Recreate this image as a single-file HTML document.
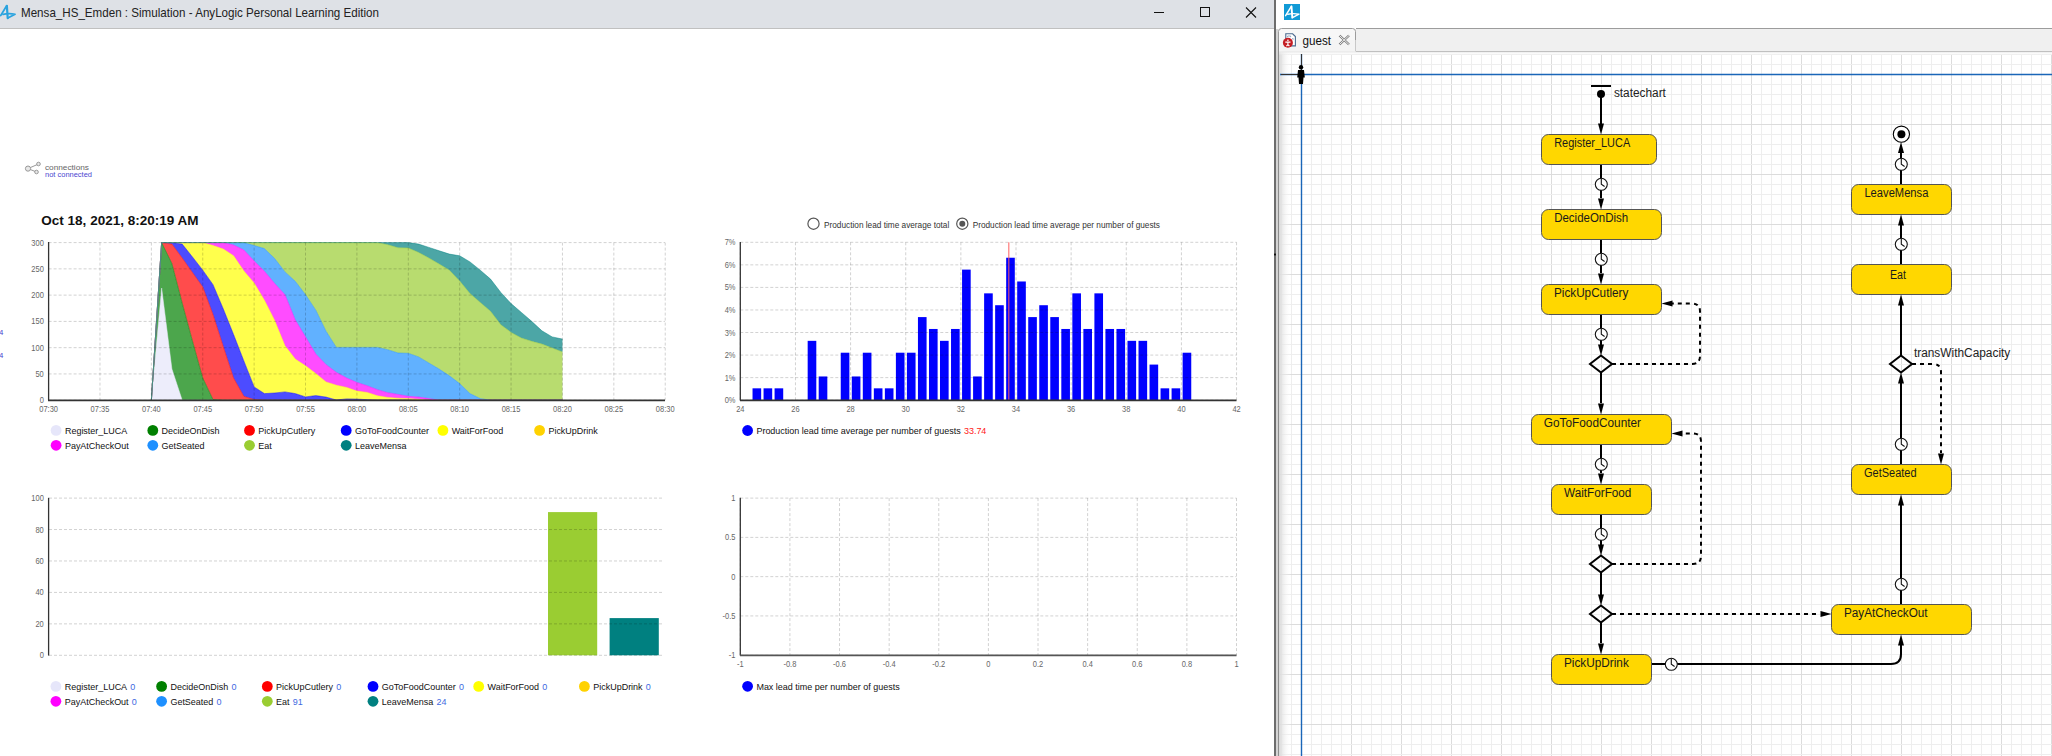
<!DOCTYPE html>
<html><head><meta charset="utf-8"><style>
html,body{margin:0;padding:0;width:2052px;height:756px;overflow:hidden;background:#fff;font-family:"Liberation Sans", sans-serif;}
svg text{font-family:"Liberation Sans", sans-serif;}
</style></head><body>
<svg width="2052" height="756" viewBox="0 0 2052 756" style="position:absolute;left:0;top:0">
<rect x="0" y="0" width="2052" height="756" fill="#fff"/>
<!-- title bar -->
<rect x="0" y="0" width="1274" height="28" fill="#dee1e6"/>
<rect x="0" y="28" width="1274" height="1" fill="#c0c0c0"/>
<g transform="translate(-1,3.3) scale(1.05)" fill="none" stroke="#29a3df" stroke-linecap="round">
<path d="M1.6 11.6 L7.3 2.4" stroke-width="1.7"/><path d="M7.5 2.4 L8.3 14.2" stroke-width="2.1"/>
<path d="M3.8 10.6 Q9 9.2 15.3 10.4 L8.4 14" stroke-width="1.6" stroke-linejoin="round"/></g>
<text x="21" y="17" font-size="12.2" fill="#222" textLength="358" lengthAdjust="spacingAndGlyphs">Mensa_HS_Emden : Simulation - AnyLogic Personal Learning Edition</text>
<rect x="1154" y="12" width="10" height="1" fill="#111"/>
<rect x="1200.5" y="7.5" width="9" height="9" fill="none" stroke="#111" stroke-width="1"/>
<path d="M1246 7.5 L1256 17.5 M1256 7.5 L1246 17.5" stroke="#111" stroke-width="1.1"/>
<!-- connections -->
<g stroke="#999" stroke-width="1" fill="#e8e8e8">
<line x1="28" y1="168.6" x2="38.5" y2="164"/><line x1="28" y1="168.6" x2="36.5" y2="172"/>
<circle cx="28" cy="168.6" r="2.6"/><circle cx="38.5" cy="164" r="1.8"/><circle cx="36.5" cy="172" r="1.8"/>
</g>
<text x="45" y="170" font-size="8" fill="#666" textLength="44" lengthAdjust="spacingAndGlyphs">connections</text>
<text x="45" y="177" font-size="8" fill="#4b45d0" textLength="47" lengthAdjust="spacingAndGlyphs">not connected</text>
<text x="-0.9" y="334.8" font-size="7.8" fill="#4b45d0">4</text>
<text x="-0.9" y="357.6" font-size="7.8" fill="#4b45d0">4</text>
<text x="41.3" y="224.5" font-size="13.5" font-weight="bold" fill="#111" textLength="157.3" lengthAdjust="spacingAndGlyphs">Oct 18, 2021, 8:20:19 AM</text>
<polygon points="151.37,400.2 161.65,288 171.92,369 182.2,400.2 192.48,400.2 202.75,400.2 213.03,400.2 223.31,400.2 233.59,400.2 243.86,400.2 254.14,400.2 264.42,400.2 274.69,400.2 284.97,400.2 295.25,400.2 305.52,400.2 315.8,400.2 326.08,400.2 336.36,400.2 346.63,400.2 356.91,400.2 367.19,400.2 377.46,400.2 387.74,400.2 398.02,400.2 408.3,400.2 418.57,400.2 428.85,400.2 439.13,400.2 449.4,400.2 459.68,400.2 469.96,400.2 480.23,400.2 490.51,400.2 500.79,400.2 511.06,400.2 521.34,400.2 531.62,400.2 541.9,400.2 552.17,400.2 562.45,400.2 562.45,400.2 552.17,400.2 541.9,400.2 531.62,400.2 521.34,400.2 511.06,400.2 500.79,400.2 490.51,400.2 480.23,400.2 469.96,400.2 459.68,400.2 449.4,400.2 439.13,400.2 428.85,400.2 418.57,400.2 408.3,400.2 398.02,400.2 387.74,400.2 377.46,400.2 367.19,400.2 356.91,400.2 346.63,400.2 336.36,400.2 326.08,400.2 315.8,400.2 305.52,400.2 295.25,400.2 284.97,400.2 274.69,400.2 264.42,400.2 254.14,400.2 243.86,400.2 233.59,400.2 223.31,400.2 213.03,400.2 202.75,400.2 192.48,400.2 182.2,400.2 171.92,400.2 161.65,400.2 151.37,400.2" fill="#e6e6fa" fill-opacity="0.7"/><polygon points="151.37,400.2 161.65,242.6 171.92,263.6 182.2,303 192.48,341 202.75,378 213.03,399.5 223.31,400.2 233.59,400.2 243.86,400.2 254.14,400.2 264.42,400.2 274.69,400.2 284.97,400.2 295.25,400.2 305.52,400.2 315.8,400.2 326.08,400.2 336.36,400.2 346.63,400.2 356.91,400.2 367.19,400.2 377.46,400.2 387.74,400.2 398.02,400.2 408.3,400.2 418.57,400.2 428.85,400.2 439.13,400.2 449.4,400.2 459.68,400.2 469.96,400.2 480.23,400.2 490.51,400.2 500.79,400.2 511.06,400.2 521.34,400.2 531.62,400.2 541.9,400.2 552.17,400.2 562.45,400.2 562.45,400.2 552.17,400.2 541.9,400.2 531.62,400.2 521.34,400.2 511.06,400.2 500.79,400.2 490.51,400.2 480.23,400.2 469.96,400.2 459.68,400.2 449.4,400.2 439.13,400.2 428.85,400.2 418.57,400.2 408.3,400.2 398.02,400.2 387.74,400.2 377.46,400.2 367.19,400.2 356.91,400.2 346.63,400.2 336.36,400.2 326.08,400.2 315.8,400.2 305.52,400.2 295.25,400.2 284.97,400.2 274.69,400.2 264.42,400.2 254.14,400.2 243.86,400.2 233.59,400.2 223.31,400.2 213.03,400.2 202.75,400.2 192.48,400.2 182.2,400.2 171.92,369 161.65,288 151.37,400.2" fill="#008000" fill-opacity="0.7"/><polygon points="151.37,400.2 161.65,242.6 171.92,244.1 182.2,258 192.48,272.5 202.75,286.9 213.03,314.5 223.31,346.5 233.59,378 243.86,396.3 254.14,399.5 264.42,400.2 274.69,400.2 284.97,400.2 295.25,400.2 305.52,400.2 315.8,400.2 326.08,400.2 336.36,400.2 346.63,400.2 356.91,400.2 367.19,400.2 377.46,400.2 387.74,400.2 398.02,400.2 408.3,400.2 418.57,400.2 428.85,400.2 439.13,400.2 449.4,400.2 459.68,400.2 469.96,400.2 480.23,400.2 490.51,400.2 500.79,400.2 511.06,400.2 521.34,400.2 531.62,400.2 541.9,400.2 552.17,400.2 562.45,400.2 562.45,400.2 552.17,400.2 541.9,400.2 531.62,400.2 521.34,400.2 511.06,400.2 500.79,400.2 490.51,400.2 480.23,400.2 469.96,400.2 459.68,400.2 449.4,400.2 439.13,400.2 428.85,400.2 418.57,400.2 408.3,400.2 398.02,400.2 387.74,400.2 377.46,400.2 367.19,400.2 356.91,400.2 346.63,400.2 336.36,400.2 326.08,400.2 315.8,400.2 305.52,400.2 295.25,400.2 284.97,400.2 274.69,400.2 264.42,400.2 254.14,400.2 243.86,400.2 233.59,400.2 223.31,400.2 213.03,399.5 202.75,378 192.48,341 182.2,303 171.92,263.6 161.65,242.6 151.37,400.2" fill="#ff0000" fill-opacity="0.7"/><polygon points="151.37,400.2 161.65,242.6 171.92,242.6 182.2,244.1 192.48,257 202.75,270.2 213.03,284.7 223.31,309 233.59,334.6 243.86,361 254.14,386.9 264.42,393.6 274.69,393 284.97,391.9 295.25,393.6 305.52,396.9 315.8,395.6 326.08,397.1 336.36,400 346.63,398.9 356.91,399.1 367.19,399.7 377.46,400.2 387.74,400.2 398.02,400.2 408.3,400.2 418.57,400.2 428.85,400.2 439.13,400.2 449.4,400.2 459.68,400.2 469.96,400.2 480.23,400.2 490.51,400.2 500.79,400.2 511.06,400.2 521.34,400.2 531.62,400.2 541.9,400.2 552.17,400.2 562.45,400.2 562.45,400.2 552.17,400.2 541.9,400.2 531.62,400.2 521.34,400.2 511.06,400.2 500.79,400.2 490.51,400.2 480.23,400.2 469.96,400.2 459.68,400.2 449.4,400.2 439.13,400.2 428.85,400.2 418.57,400.2 408.3,400.2 398.02,400.2 387.74,400.2 377.46,400.2 367.19,400.2 356.91,400.2 346.63,400.2 336.36,400.2 326.08,400.2 315.8,400.2 305.52,400.2 295.25,400.2 284.97,400.2 274.69,400.2 264.42,400.2 254.14,399.5 243.86,396.3 233.59,378 223.31,346.5 213.03,314.5 202.75,286.9 192.48,272.5 182.2,258 171.92,244.1 161.65,242.6 151.37,400.2" fill="#0000ff" fill-opacity="0.7"/><polygon points="151.37,400.2 161.65,242.6 171.92,242.6 182.2,242.6 192.48,242.6 202.75,242.6 213.03,245.5 223.31,249 233.59,255.8 243.86,271 254.14,283 264.42,300.2 274.69,320.5 284.97,345.8 295.25,359.1 305.52,365.8 315.8,373.6 326.08,381.9 336.36,385.2 346.63,387.4 356.91,391.1 367.19,392.4 377.46,395.8 387.74,397.4 398.02,398.2 408.3,398.6 418.57,399.3 428.85,400.2 439.13,400.2 449.4,400.2 459.68,400.2 469.96,400.2 480.23,400.2 490.51,400.2 500.79,400.2 511.06,400.2 521.34,400.2 531.62,400.2 541.9,400.2 552.17,400.2 562.45,400.2 562.45,400.2 552.17,400.2 541.9,400.2 531.62,400.2 521.34,400.2 511.06,400.2 500.79,400.2 490.51,400.2 480.23,400.2 469.96,400.2 459.68,400.2 449.4,400.2 439.13,400.2 428.85,400.2 418.57,400.2 408.3,400.2 398.02,400.2 387.74,400.2 377.46,400.2 367.19,399.7 356.91,399.1 346.63,398.9 336.36,400 326.08,397.1 315.8,395.6 305.52,396.9 295.25,393.6 284.97,391.9 274.69,393 264.42,393.6 254.14,386.9 243.86,361 233.59,334.6 223.31,309 213.03,284.7 202.75,270.2 192.48,257 182.2,244.1 171.92,242.6 161.65,242.6 151.37,400.2" fill="#ffff00" fill-opacity="0.7"/><polygon points="151.37,400.2 161.65,242.6 171.92,242.6 182.2,242.6 192.48,242.6 202.75,242.6 213.03,242.6 223.31,242.6 233.59,245 243.86,250 254.14,261 264.42,271.3 274.69,283.6 284.97,294.7 295.25,320 305.52,336.9 315.8,354.1 326.08,364.7 336.36,372.4 346.63,378 356.91,382.4 367.19,385.8 377.46,389.7 387.74,392.7 398.02,394.4 408.3,396.3 418.57,397.1 428.85,398.6 439.13,400.2 449.4,400.2 459.68,400.2 469.96,400.2 480.23,400.2 490.51,400.2 500.79,400.2 511.06,400.2 521.34,400.2 531.62,400.2 541.9,400.2 552.17,400.2 562.45,400.2 562.45,400.2 552.17,400.2 541.9,400.2 531.62,400.2 521.34,400.2 511.06,400.2 500.79,400.2 490.51,400.2 480.23,400.2 469.96,400.2 459.68,400.2 449.4,400.2 439.13,400.2 428.85,400.2 418.57,399.3 408.3,398.6 398.02,398.2 387.74,397.4 377.46,395.8 367.19,392.4 356.91,391.1 346.63,387.4 336.36,385.2 326.08,381.9 315.8,373.6 305.52,365.8 295.25,359.1 284.97,345.8 274.69,320.5 264.42,300.2 254.14,283 243.86,271 233.59,255.8 223.31,249 213.03,245.5 202.75,242.6 192.48,242.6 182.2,242.6 171.92,242.6 161.65,242.6 151.37,400.2" fill="#ff00ff" fill-opacity="0.7"/><polygon points="151.37,400.2 161.65,242.6 171.92,242.6 182.2,242.6 192.48,242.6 202.75,242.6 213.03,242.6 223.31,242.6 233.59,242.6 243.86,242.6 254.14,245.5 264.42,248.6 274.69,258.6 284.97,271.9 295.25,281.3 305.52,294.7 315.8,310.2 326.08,331.3 336.36,347.4 346.63,347.4 356.91,347.4 367.19,347.4 377.46,347.4 387.74,349.7 398.02,353 408.3,353.3 418.57,356.9 428.85,363 439.13,369.1 449.4,375.8 459.68,383.6 469.96,393.6 480.23,398.6 490.51,400.2 500.79,400.2 511.06,400.2 521.34,400.2 531.62,400.2 541.9,400.2 552.17,400.2 562.45,400.2 562.45,400.2 552.17,400.2 541.9,400.2 531.62,400.2 521.34,400.2 511.06,400.2 500.79,400.2 490.51,400.2 480.23,400.2 469.96,400.2 459.68,400.2 449.4,400.2 439.13,400.2 428.85,398.6 418.57,397.1 408.3,396.3 398.02,394.4 387.74,392.7 377.46,389.7 367.19,385.8 356.91,382.4 346.63,378 336.36,372.4 326.08,364.7 315.8,354.1 305.52,336.9 295.25,320 284.97,294.7 274.69,283.6 264.42,271.3 254.14,261 243.86,250 233.59,245 223.31,242.6 213.03,242.6 202.75,242.6 192.48,242.6 182.2,242.6 171.92,242.6 161.65,242.6 151.37,400.2" fill="#1e90ff" fill-opacity="0.7"/><polygon points="151.37,400.2 161.65,242.6 171.92,242.6 182.2,242.6 192.48,242.6 202.75,242.6 213.03,242.6 223.31,242.6 233.59,242.6 243.86,242.6 254.14,242.6 264.42,242.6 274.69,242.6 284.97,242.6 295.25,242.6 305.52,242.6 315.8,242.6 326.08,242.6 336.36,242.6 346.63,242.6 356.91,242.6 367.19,242.6 377.46,242.6 387.74,244.7 398.02,247.8 408.3,248 418.57,252.4 428.85,258 439.13,264.1 449.4,270.2 459.68,281 469.96,293.6 480.23,302.4 490.51,311.3 500.79,324.7 511.06,332.4 521.34,338 531.62,341.3 541.9,344.1 552.17,348 562.45,351.9 562.45,400.2 552.17,400.2 541.9,400.2 531.62,400.2 521.34,400.2 511.06,400.2 500.79,400.2 490.51,400.2 480.23,398.6 469.96,393.6 459.68,383.6 449.4,375.8 439.13,369.1 428.85,363 418.57,356.9 408.3,353.3 398.02,353 387.74,349.7 377.46,347.4 367.19,347.4 356.91,347.4 346.63,347.4 336.36,347.4 326.08,331.3 315.8,310.2 305.52,294.7 295.25,281.3 284.97,271.9 274.69,258.6 264.42,248.6 254.14,245.5 243.86,242.6 233.59,242.6 223.31,242.6 213.03,242.6 202.75,242.6 192.48,242.6 182.2,242.6 171.92,242.6 161.65,242.6 151.37,400.2" fill="#9acd32" fill-opacity="0.7"/><polygon points="151.37,400.2 161.65,242.6 171.92,242.6 182.2,242.6 192.48,242.6 202.75,242.6 213.03,242.6 223.31,242.6 233.59,242.6 243.86,242.6 254.14,242.6 264.42,242.6 274.69,242.6 284.97,242.6 295.25,242.6 305.52,242.6 315.8,242.6 326.08,242.6 336.36,242.6 346.63,242.6 356.91,242.6 367.19,242.6 377.46,242.6 387.74,242.6 398.02,242.6 408.3,242.6 418.57,244.1 428.85,247.4 439.13,250.8 449.4,254.1 459.68,255.8 469.96,261.9 480.23,270.2 490.51,279.1 500.79,292.4 511.06,303.6 521.34,312.4 531.62,321.3 541.9,330.8 552.17,336.9 562.45,339.1 562.45,351.9 552.17,348 541.9,344.1 531.62,341.3 521.34,338 511.06,332.4 500.79,324.7 490.51,311.3 480.23,302.4 469.96,293.6 459.68,281 449.4,270.2 439.13,264.1 428.85,258 418.57,252.4 408.3,248 398.02,247.8 387.74,244.7 377.46,242.6 367.19,242.6 356.91,242.6 346.63,242.6 336.36,242.6 326.08,242.6 315.8,242.6 305.52,242.6 295.25,242.6 284.97,242.6 274.69,242.6 264.42,242.6 254.14,242.6 243.86,242.6 233.59,242.6 223.31,242.6 213.03,242.6 202.75,242.6 192.48,242.6 182.2,242.6 171.92,242.6 161.65,242.6 151.37,400.2" fill="#008080" fill-opacity="0.7"/><polyline points="151.37,400.2 161.65,288 171.92,369 182.2,400.2 192.48,400.2 202.75,400.2 213.03,400.2 223.31,400.2 233.59,400.2 243.86,400.2 254.14,400.2 264.42,400.2 274.69,400.2 284.97,400.2 295.25,400.2 305.52,400.2 315.8,400.2 326.08,400.2 336.36,400.2 346.63,400.2 356.91,400.2 367.19,400.2 377.46,400.2 387.74,400.2 398.02,400.2 408.3,400.2 418.57,400.2 428.85,400.2 439.13,400.2 449.4,400.2 459.68,400.2 469.96,400.2 480.23,400.2 490.51,400.2 500.79,400.2 511.06,400.2 521.34,400.2 531.62,400.2 541.9,400.2 552.17,400.2 562.45,400.2" fill="none" stroke="#e6e6fa" stroke-opacity="0.6" stroke-width="0.8"/><polyline points="151.37,400.2 161.65,242.6 171.92,263.6 182.2,303 192.48,341 202.75,378 213.03,399.5 223.31,400.2 233.59,400.2 243.86,400.2 254.14,400.2 264.42,400.2 274.69,400.2 284.97,400.2 295.25,400.2 305.52,400.2 315.8,400.2 326.08,400.2 336.36,400.2 346.63,400.2 356.91,400.2 367.19,400.2 377.46,400.2 387.74,400.2 398.02,400.2 408.3,400.2 418.57,400.2 428.85,400.2 439.13,400.2 449.4,400.2 459.68,400.2 469.96,400.2 480.23,400.2 490.51,400.2 500.79,400.2 511.06,400.2 521.34,400.2 531.62,400.2 541.9,400.2 552.17,400.2 562.45,400.2" fill="none" stroke="#008000" stroke-opacity="0.6" stroke-width="0.8"/><polyline points="151.37,400.2 161.65,242.6 171.92,244.1 182.2,258 192.48,272.5 202.75,286.9 213.03,314.5 223.31,346.5 233.59,378 243.86,396.3 254.14,399.5 264.42,400.2 274.69,400.2 284.97,400.2 295.25,400.2 305.52,400.2 315.8,400.2 326.08,400.2 336.36,400.2 346.63,400.2 356.91,400.2 367.19,400.2 377.46,400.2 387.74,400.2 398.02,400.2 408.3,400.2 418.57,400.2 428.85,400.2 439.13,400.2 449.4,400.2 459.68,400.2 469.96,400.2 480.23,400.2 490.51,400.2 500.79,400.2 511.06,400.2 521.34,400.2 531.62,400.2 541.9,400.2 552.17,400.2 562.45,400.2" fill="none" stroke="#ff0000" stroke-opacity="0.6" stroke-width="0.8"/><polyline points="151.37,400.2 161.65,242.6 171.92,242.6 182.2,244.1 192.48,257 202.75,270.2 213.03,284.7 223.31,309 233.59,334.6 243.86,361 254.14,386.9 264.42,393.6 274.69,393 284.97,391.9 295.25,393.6 305.52,396.9 315.8,395.6 326.08,397.1 336.36,400 346.63,398.9 356.91,399.1 367.19,399.7 377.46,400.2 387.74,400.2 398.02,400.2 408.3,400.2 418.57,400.2 428.85,400.2 439.13,400.2 449.4,400.2 459.68,400.2 469.96,400.2 480.23,400.2 490.51,400.2 500.79,400.2 511.06,400.2 521.34,400.2 531.62,400.2 541.9,400.2 552.17,400.2 562.45,400.2" fill="none" stroke="#0000ff" stroke-opacity="0.6" stroke-width="0.8"/><polyline points="151.37,400.2 161.65,242.6 171.92,242.6 182.2,242.6 192.48,242.6 202.75,242.6 213.03,245.5 223.31,249 233.59,255.8 243.86,271 254.14,283 264.42,300.2 274.69,320.5 284.97,345.8 295.25,359.1 305.52,365.8 315.8,373.6 326.08,381.9 336.36,385.2 346.63,387.4 356.91,391.1 367.19,392.4 377.46,395.8 387.74,397.4 398.02,398.2 408.3,398.6 418.57,399.3 428.85,400.2 439.13,400.2 449.4,400.2 459.68,400.2 469.96,400.2 480.23,400.2 490.51,400.2 500.79,400.2 511.06,400.2 521.34,400.2 531.62,400.2 541.9,400.2 552.17,400.2 562.45,400.2" fill="none" stroke="#ffff00" stroke-opacity="0.6" stroke-width="0.8"/><polyline points="151.37,400.2 161.65,242.6 171.92,242.6 182.2,242.6 192.48,242.6 202.75,242.6 213.03,242.6 223.31,242.6 233.59,245 243.86,250 254.14,261 264.42,271.3 274.69,283.6 284.97,294.7 295.25,320 305.52,336.9 315.8,354.1 326.08,364.7 336.36,372.4 346.63,378 356.91,382.4 367.19,385.8 377.46,389.7 387.74,392.7 398.02,394.4 408.3,396.3 418.57,397.1 428.85,398.6 439.13,400.2 449.4,400.2 459.68,400.2 469.96,400.2 480.23,400.2 490.51,400.2 500.79,400.2 511.06,400.2 521.34,400.2 531.62,400.2 541.9,400.2 552.17,400.2 562.45,400.2" fill="none" stroke="#ff00ff" stroke-opacity="0.6" stroke-width="0.8"/><polyline points="151.37,400.2 161.65,242.6 171.92,242.6 182.2,242.6 192.48,242.6 202.75,242.6 213.03,242.6 223.31,242.6 233.59,242.6 243.86,242.6 254.14,245.5 264.42,248.6 274.69,258.6 284.97,271.9 295.25,281.3 305.52,294.7 315.8,310.2 326.08,331.3 336.36,347.4 346.63,347.4 356.91,347.4 367.19,347.4 377.46,347.4 387.74,349.7 398.02,353 408.3,353.3 418.57,356.9 428.85,363 439.13,369.1 449.4,375.8 459.68,383.6 469.96,393.6 480.23,398.6 490.51,400.2 500.79,400.2 511.06,400.2 521.34,400.2 531.62,400.2 541.9,400.2 552.17,400.2 562.45,400.2" fill="none" stroke="#1e90ff" stroke-opacity="0.6" stroke-width="0.8"/><polyline points="151.37,400.2 161.65,242.6 171.92,242.6 182.2,242.6 192.48,242.6 202.75,242.6 213.03,242.6 223.31,242.6 233.59,242.6 243.86,242.6 254.14,242.6 264.42,242.6 274.69,242.6 284.97,242.6 295.25,242.6 305.52,242.6 315.8,242.6 326.08,242.6 336.36,242.6 346.63,242.6 356.91,242.6 367.19,242.6 377.46,242.6 387.74,244.7 398.02,247.8 408.3,248 418.57,252.4 428.85,258 439.13,264.1 449.4,270.2 459.68,281 469.96,293.6 480.23,302.4 490.51,311.3 500.79,324.7 511.06,332.4 521.34,338 531.62,341.3 541.9,344.1 552.17,348 562.45,351.9" fill="none" stroke="#9acd32" stroke-opacity="0.6" stroke-width="0.8"/><polyline points="151.37,400.2 161.65,242.6 171.92,242.6 182.2,242.6 192.48,242.6 202.75,242.6 213.03,242.6 223.31,242.6 233.59,242.6 243.86,242.6 254.14,242.6 264.42,242.6 274.69,242.6 284.97,242.6 295.25,242.6 305.52,242.6 315.8,242.6 326.08,242.6 336.36,242.6 346.63,242.6 356.91,242.6 367.19,242.6 377.46,242.6 387.74,242.6 398.02,242.6 408.3,242.6 418.57,244.1 428.85,247.4 439.13,250.8 449.4,254.1 459.68,255.8 469.96,261.9 480.23,270.2 490.51,279.1 500.79,292.4 511.06,303.6 521.34,312.4 531.62,321.3 541.9,330.8 552.17,336.9 562.45,339.1" fill="none" stroke="#008080" stroke-opacity="0.6" stroke-width="0.8"/><line x1="48.6" y1="242.6" x2="665" y2="242.6" stroke="#000" stroke-opacity="0.18" stroke-width="1" stroke-dasharray="3,2"/><line x1="48.6" y1="268.87" x2="665" y2="268.87" stroke="#000" stroke-opacity="0.18" stroke-width="1" stroke-dasharray="3,2"/><line x1="48.6" y1="295.13" x2="665" y2="295.13" stroke="#000" stroke-opacity="0.18" stroke-width="1" stroke-dasharray="3,2"/><line x1="48.6" y1="321.4" x2="665" y2="321.4" stroke="#000" stroke-opacity="0.18" stroke-width="1" stroke-dasharray="3,2"/><line x1="48.6" y1="347.67" x2="665" y2="347.67" stroke="#000" stroke-opacity="0.18" stroke-width="1" stroke-dasharray="3,2"/><line x1="48.6" y1="373.93" x2="665" y2="373.93" stroke="#000" stroke-opacity="0.18" stroke-width="1" stroke-dasharray="3,2"/><line x1="48.6" y1="400.2" x2="665" y2="400.2" stroke="#000" stroke-opacity="0.18" stroke-width="1" stroke-dasharray="3,2"/><line x1="48.6" y1="242.6" x2="48.6" y2="400.2" stroke="#000" stroke-opacity="0.18" stroke-width="1" stroke-dasharray="3,2"/><line x1="99.98" y1="242.6" x2="99.98" y2="400.2" stroke="#000" stroke-opacity="0.18" stroke-width="1" stroke-dasharray="3,2"/><line x1="151.37" y1="242.6" x2="151.37" y2="400.2" stroke="#000" stroke-opacity="0.18" stroke-width="1" stroke-dasharray="3,2"/><line x1="202.75" y1="242.6" x2="202.75" y2="400.2" stroke="#000" stroke-opacity="0.18" stroke-width="1" stroke-dasharray="3,2"/><line x1="254.14" y1="242.6" x2="254.14" y2="400.2" stroke="#000" stroke-opacity="0.18" stroke-width="1" stroke-dasharray="3,2"/><line x1="305.53" y1="242.6" x2="305.53" y2="400.2" stroke="#000" stroke-opacity="0.18" stroke-width="1" stroke-dasharray="3,2"/><line x1="356.91" y1="242.6" x2="356.91" y2="400.2" stroke="#000" stroke-opacity="0.18" stroke-width="1" stroke-dasharray="3,2"/><line x1="408.3" y1="242.6" x2="408.3" y2="400.2" stroke="#000" stroke-opacity="0.18" stroke-width="1" stroke-dasharray="3,2"/><line x1="459.68" y1="242.6" x2="459.68" y2="400.2" stroke="#000" stroke-opacity="0.18" stroke-width="1" stroke-dasharray="3,2"/><line x1="511.06" y1="242.6" x2="511.06" y2="400.2" stroke="#000" stroke-opacity="0.18" stroke-width="1" stroke-dasharray="3,2"/><line x1="562.45" y1="242.6" x2="562.45" y2="400.2" stroke="#000" stroke-opacity="0.18" stroke-width="1" stroke-dasharray="3,2"/><line x1="613.84" y1="242.6" x2="613.84" y2="400.2" stroke="#000" stroke-opacity="0.18" stroke-width="1" stroke-dasharray="3,2"/><line x1="665.22" y1="242.6" x2="665.22" y2="400.2" stroke="#000" stroke-opacity="0.18" stroke-width="1" stroke-dasharray="3,2"/><line x1="48.6" y1="242" x2="48.6" y2="400.5" stroke="#333" stroke-width="1.3"/><line x1="48" y1="400.4" x2="665" y2="400.4" stroke="#333" stroke-width="1.6"/><text x="43.8" y="245.6" font-size="8.5" fill="#666" text-anchor="end" textLength="12.48" lengthAdjust="spacingAndGlyphs">300</text><text x="43.8" y="271.87" font-size="8.5" fill="#666" text-anchor="end" textLength="12.48" lengthAdjust="spacingAndGlyphs">250</text><text x="43.8" y="298.13" font-size="8.5" fill="#666" text-anchor="end" textLength="12.48" lengthAdjust="spacingAndGlyphs">200</text><text x="43.8" y="324.4" font-size="8.5" fill="#666" text-anchor="end" textLength="12.48" lengthAdjust="spacingAndGlyphs">150</text><text x="43.8" y="350.67" font-size="8.5" fill="#666" text-anchor="end" textLength="12.48" lengthAdjust="spacingAndGlyphs">100</text><text x="43.8" y="376.93" font-size="8.5" fill="#666" text-anchor="end" textLength="8.32" lengthAdjust="spacingAndGlyphs">50</text><text x="43.8" y="403.2" font-size="8.5" fill="#666" text-anchor="end" textLength="4.16" lengthAdjust="spacingAndGlyphs">0</text><text x="48.6" y="412" font-size="8.5" fill="#666" text-anchor="middle" textLength="18.72" lengthAdjust="spacingAndGlyphs">07:30</text><text x="99.98" y="412" font-size="8.5" fill="#666" text-anchor="middle" textLength="18.72" lengthAdjust="spacingAndGlyphs">07:35</text><text x="151.37" y="412" font-size="8.5" fill="#666" text-anchor="middle" textLength="18.72" lengthAdjust="spacingAndGlyphs">07:40</text><text x="202.75" y="412" font-size="8.5" fill="#666" text-anchor="middle" textLength="18.72" lengthAdjust="spacingAndGlyphs">07:45</text><text x="254.14" y="412" font-size="8.5" fill="#666" text-anchor="middle" textLength="18.72" lengthAdjust="spacingAndGlyphs">07:50</text><text x="305.53" y="412" font-size="8.5" fill="#666" text-anchor="middle" textLength="18.72" lengthAdjust="spacingAndGlyphs">07:55</text><text x="356.91" y="412" font-size="8.5" fill="#666" text-anchor="middle" textLength="18.72" lengthAdjust="spacingAndGlyphs">08:00</text><text x="408.3" y="412" font-size="8.5" fill="#666" text-anchor="middle" textLength="18.72" lengthAdjust="spacingAndGlyphs">08:05</text><text x="459.68" y="412" font-size="8.5" fill="#666" text-anchor="middle" textLength="18.72" lengthAdjust="spacingAndGlyphs">08:10</text><text x="511.06" y="412" font-size="8.5" fill="#666" text-anchor="middle" textLength="18.72" lengthAdjust="spacingAndGlyphs">08:15</text><text x="562.45" y="412" font-size="8.5" fill="#666" text-anchor="middle" textLength="18.72" lengthAdjust="spacingAndGlyphs">08:20</text><text x="613.84" y="412" font-size="8.5" fill="#666" text-anchor="middle" textLength="18.72" lengthAdjust="spacingAndGlyphs">08:25</text><text x="665.22" y="412" font-size="8.5" fill="#666" text-anchor="middle" textLength="18.72" lengthAdjust="spacingAndGlyphs">08:30</text><circle cx="56.1" cy="430.4" r="5.4" fill="#e6e6fa"/><text x="64.9" y="434" font-size="9.8" fill="#111" textLength="62.43" lengthAdjust="spacingAndGlyphs">Register_LUCA</text><circle cx="152.8" cy="430.4" r="5.4" fill="#008000"/><text x="161.6" y="434" font-size="9.8" fill="#111" textLength="57.94" lengthAdjust="spacingAndGlyphs">DecideOnDish</text><circle cx="249.5" cy="430.4" r="5.4" fill="#ff0000"/><text x="258.3" y="434" font-size="9.8" fill="#111" textLength="56.93" lengthAdjust="spacingAndGlyphs">PickUpCutlery</text><circle cx="346.2" cy="430.4" r="5.4" fill="#0000ff"/><text x="355" y="434" font-size="9.8" fill="#111" textLength="73.93" lengthAdjust="spacingAndGlyphs">GoToFoodCounter</text><circle cx="442.9" cy="430.4" r="5.4" fill="#ffff00"/><text x="451.7" y="434" font-size="9.8" fill="#111" textLength="51.6" lengthAdjust="spacingAndGlyphs">WaitForFood</text><circle cx="539.6" cy="430.4" r="5.4" fill="#ffd200"/><text x="548.4" y="434" font-size="9.8" fill="#111" textLength="49.43" lengthAdjust="spacingAndGlyphs">PickUpDrink</text><circle cx="56.1" cy="445.3" r="5.4" fill="#ff00ff"/><text x="64.9" y="448.9" font-size="9.8" fill="#111" textLength="63.93" lengthAdjust="spacingAndGlyphs">PayAtCheckOut</text><circle cx="152.8" cy="445.3" r="5.4" fill="#1e90ff"/><text x="161.6" y="448.9" font-size="9.8" fill="#111" textLength="42.96" lengthAdjust="spacingAndGlyphs">GetSeated</text><circle cx="249.5" cy="445.3" r="5.4" fill="#9acd32"/><text x="258.3" y="448.9" font-size="9.8" fill="#111" textLength="13.49" lengthAdjust="spacingAndGlyphs">Eat</text><circle cx="346.2" cy="445.3" r="5.4" fill="#008080"/><text x="355" y="448.9" font-size="9.8" fill="#111" textLength="51.45" lengthAdjust="spacingAndGlyphs">LeaveMensa</text><rect x="752.53" y="388.33" width="8.63" height="11.87" fill="#0000ff"/><rect x="763.56" y="388.33" width="8.63" height="11.87" fill="#0000ff"/><rect x="774.58" y="388.33" width="8.63" height="11.87" fill="#0000ff"/><rect x="807.67" y="340.84" width="8.63" height="59.36" fill="#0000ff"/><rect x="818.7" y="376.46" width="8.63" height="23.74" fill="#0000ff"/><rect x="840.75" y="352.71" width="8.63" height="47.49" fill="#0000ff"/><rect x="851.78" y="376.46" width="8.63" height="23.74" fill="#0000ff"/><rect x="862.81" y="352.71" width="8.63" height="47.49" fill="#0000ff"/><rect x="873.84" y="388.33" width="8.63" height="11.87" fill="#0000ff"/><rect x="884.86" y="388.33" width="8.63" height="11.87" fill="#0000ff"/><rect x="895.89" y="352.71" width="8.63" height="47.49" fill="#0000ff"/><rect x="906.92" y="352.71" width="8.63" height="47.49" fill="#0000ff"/><rect x="917.95" y="317.09" width="8.63" height="83.11" fill="#0000ff"/><rect x="928.98" y="328.97" width="8.63" height="71.23" fill="#0000ff"/><rect x="940" y="340.84" width="8.63" height="59.36" fill="#0000ff"/><rect x="951.03" y="328.97" width="8.63" height="71.23" fill="#0000ff"/><rect x="962.06" y="269.61" width="8.63" height="130.59" fill="#0000ff"/><rect x="973.09" y="376.46" width="8.63" height="23.74" fill="#0000ff"/><rect x="984.12" y="293.35" width="8.63" height="106.85" fill="#0000ff"/><rect x="995.14" y="305.22" width="8.63" height="94.98" fill="#0000ff"/><rect x="1006.17" y="257.73" width="8.63" height="142.47" fill="#0000ff"/><rect x="1017.2" y="281.48" width="8.63" height="118.72" fill="#0000ff"/><rect x="1028.23" y="317.09" width="8.63" height="83.11" fill="#0000ff"/><rect x="1039.26" y="305.22" width="8.63" height="94.98" fill="#0000ff"/><rect x="1050.28" y="317.09" width="8.63" height="83.11" fill="#0000ff"/><rect x="1061.31" y="328.97" width="8.63" height="71.23" fill="#0000ff"/><rect x="1072.34" y="293.35" width="8.63" height="106.85" fill="#0000ff"/><rect x="1083.37" y="328.97" width="8.63" height="71.23" fill="#0000ff"/><rect x="1094.4" y="293.35" width="8.63" height="106.85" fill="#0000ff"/><rect x="1105.42" y="328.97" width="8.63" height="71.23" fill="#0000ff"/><rect x="1116.45" y="328.97" width="8.63" height="71.23" fill="#0000ff"/><rect x="1127.48" y="340.84" width="8.63" height="59.36" fill="#0000ff"/><rect x="1138.51" y="340.84" width="8.63" height="59.36" fill="#0000ff"/><rect x="1149.54" y="364.58" width="8.63" height="35.62" fill="#0000ff"/><rect x="1160.56" y="388.33" width="8.63" height="11.87" fill="#0000ff"/><rect x="1171.59" y="388.33" width="8.63" height="11.87" fill="#0000ff"/><rect x="1182.62" y="352.71" width="8.63" height="47.49" fill="#0000ff"/><line x1="740.3" y1="242.3" x2="1236.5" y2="242.3" stroke="#000" stroke-opacity="0.18" stroke-width="1" stroke-dasharray="3,2"/><line x1="740.3" y1="264.86" x2="1236.5" y2="264.86" stroke="#000" stroke-opacity="0.18" stroke-width="1" stroke-dasharray="3,2"/><line x1="740.3" y1="287.41" x2="1236.5" y2="287.41" stroke="#000" stroke-opacity="0.18" stroke-width="1" stroke-dasharray="3,2"/><line x1="740.3" y1="309.97" x2="1236.5" y2="309.97" stroke="#000" stroke-opacity="0.18" stroke-width="1" stroke-dasharray="3,2"/><line x1="740.3" y1="332.53" x2="1236.5" y2="332.53" stroke="#000" stroke-opacity="0.18" stroke-width="1" stroke-dasharray="3,2"/><line x1="740.3" y1="355.09" x2="1236.5" y2="355.09" stroke="#000" stroke-opacity="0.18" stroke-width="1" stroke-dasharray="3,2"/><line x1="740.3" y1="377.64" x2="1236.5" y2="377.64" stroke="#000" stroke-opacity="0.18" stroke-width="1" stroke-dasharray="3,2"/><line x1="740.3" y1="400.2" x2="1236.5" y2="400.2" stroke="#000" stroke-opacity="0.18" stroke-width="1" stroke-dasharray="3,2"/><line x1="740.3" y1="242.3" x2="740.3" y2="400.2" stroke="#000" stroke-opacity="0.18" stroke-width="1" stroke-dasharray="3,2"/><line x1="795.44" y1="242.3" x2="795.44" y2="400.2" stroke="#000" stroke-opacity="0.18" stroke-width="1" stroke-dasharray="3,2"/><line x1="850.58" y1="242.3" x2="850.58" y2="400.2" stroke="#000" stroke-opacity="0.18" stroke-width="1" stroke-dasharray="3,2"/><line x1="905.72" y1="242.3" x2="905.72" y2="400.2" stroke="#000" stroke-opacity="0.18" stroke-width="1" stroke-dasharray="3,2"/><line x1="960.86" y1="242.3" x2="960.86" y2="400.2" stroke="#000" stroke-opacity="0.18" stroke-width="1" stroke-dasharray="3,2"/><line x1="1016" y1="242.3" x2="1016" y2="400.2" stroke="#000" stroke-opacity="0.18" stroke-width="1" stroke-dasharray="3,2"/><line x1="1071.14" y1="242.3" x2="1071.14" y2="400.2" stroke="#000" stroke-opacity="0.18" stroke-width="1" stroke-dasharray="3,2"/><line x1="1126.28" y1="242.3" x2="1126.28" y2="400.2" stroke="#000" stroke-opacity="0.18" stroke-width="1" stroke-dasharray="3,2"/><line x1="1181.42" y1="242.3" x2="1181.42" y2="400.2" stroke="#000" stroke-opacity="0.18" stroke-width="1" stroke-dasharray="3,2"/><line x1="1236.56" y1="242.3" x2="1236.56" y2="400.2" stroke="#000" stroke-opacity="0.18" stroke-width="1" stroke-dasharray="3,2"/><line x1="1008.83" y1="242.3" x2="1008.83" y2="400" stroke="#ff6060" stroke-width="1"/><line x1="740.3" y1="242" x2="740.3" y2="400.5" stroke="#333" stroke-width="1.3"/><line x1="740" y1="400.4" x2="1236.5" y2="400.4" stroke="#333" stroke-width="1.6"/><text x="735.5" y="403.2" font-size="8.5" fill="#666" text-anchor="end" textLength="10.81" lengthAdjust="spacingAndGlyphs">0%</text><text x="735.5" y="380.64" font-size="8.5" fill="#666" text-anchor="end" textLength="10.81" lengthAdjust="spacingAndGlyphs">1%</text><text x="735.5" y="358.09" font-size="8.5" fill="#666" text-anchor="end" textLength="10.81" lengthAdjust="spacingAndGlyphs">2%</text><text x="735.5" y="335.53" font-size="8.5" fill="#666" text-anchor="end" textLength="10.81" lengthAdjust="spacingAndGlyphs">3%</text><text x="735.5" y="312.97" font-size="8.5" fill="#666" text-anchor="end" textLength="10.81" lengthAdjust="spacingAndGlyphs">4%</text><text x="735.5" y="290.41" font-size="8.5" fill="#666" text-anchor="end" textLength="10.81" lengthAdjust="spacingAndGlyphs">5%</text><text x="735.5" y="267.86" font-size="8.5" fill="#666" text-anchor="end" textLength="10.81" lengthAdjust="spacingAndGlyphs">6%</text><text x="735.5" y="245.3" font-size="8.5" fill="#666" text-anchor="end" textLength="10.81" lengthAdjust="spacingAndGlyphs">7%</text><text x="740.3" y="412" font-size="8.5" fill="#666" text-anchor="middle" textLength="8.32" lengthAdjust="spacingAndGlyphs">24</text><text x="795.44" y="412" font-size="8.5" fill="#666" text-anchor="middle" textLength="8.32" lengthAdjust="spacingAndGlyphs">26</text><text x="850.58" y="412" font-size="8.5" fill="#666" text-anchor="middle" textLength="8.32" lengthAdjust="spacingAndGlyphs">28</text><text x="905.72" y="412" font-size="8.5" fill="#666" text-anchor="middle" textLength="8.32" lengthAdjust="spacingAndGlyphs">30</text><text x="960.86" y="412" font-size="8.5" fill="#666" text-anchor="middle" textLength="8.32" lengthAdjust="spacingAndGlyphs">32</text><text x="1016" y="412" font-size="8.5" fill="#666" text-anchor="middle" textLength="8.32" lengthAdjust="spacingAndGlyphs">34</text><text x="1071.14" y="412" font-size="8.5" fill="#666" text-anchor="middle" textLength="8.32" lengthAdjust="spacingAndGlyphs">36</text><text x="1126.28" y="412" font-size="8.5" fill="#666" text-anchor="middle" textLength="8.32" lengthAdjust="spacingAndGlyphs">38</text><text x="1181.42" y="412" font-size="8.5" fill="#666" text-anchor="middle" textLength="8.32" lengthAdjust="spacingAndGlyphs">40</text><text x="1236.56" y="412" font-size="8.5" fill="#666" text-anchor="middle" textLength="8.32" lengthAdjust="spacingAndGlyphs">42</text><circle cx="813.5" cy="223.7" r="5.6" fill="#fff" stroke="#555" stroke-width="1.2"/><text x="824" y="227.6" font-size="8.25" fill="#333" textLength="125.3" lengthAdjust="spacingAndGlyphs">Production lead time average total</text><circle cx="962.3" cy="223.7" r="5.6" fill="#fff" stroke="#555" stroke-width="1.2"/><circle cx="962.3" cy="223.7" r="3" fill="#555"/><text x="972.7" y="227.6" font-size="8.25" fill="#333" textLength="187.3" lengthAdjust="spacingAndGlyphs">Production lead time average per number of guests</text><circle cx="747.6" cy="430.5" r="5.4" fill="#0000ff"/><text x="756.4" y="434.1" font-size="9.8" fill="#111" textLength="204.3" lengthAdjust="spacingAndGlyphs">Production lead time average per number of guests</text><text x="963.9" y="434.1" font-size="9.8" fill="#ff2020" textLength="22.49" lengthAdjust="spacingAndGlyphs">33.74</text><rect x="548" y="512.1" width="49.2" height="143.2" fill="#9acd32"/><rect x="609.6" y="618.1" width="49.2" height="37.2" fill="#008080"/><line x1="49" y1="498.1" x2="664" y2="498.1" stroke="#000" stroke-opacity="0.18" stroke-width="1" stroke-dasharray="3,2"/><line x1="49" y1="529.54" x2="664" y2="529.54" stroke="#000" stroke-opacity="0.18" stroke-width="1" stroke-dasharray="3,2"/><line x1="49" y1="560.98" x2="664" y2="560.98" stroke="#000" stroke-opacity="0.18" stroke-width="1" stroke-dasharray="3,2"/><line x1="49" y1="592.42" x2="664" y2="592.42" stroke="#000" stroke-opacity="0.18" stroke-width="1" stroke-dasharray="3,2"/><line x1="49" y1="623.86" x2="664" y2="623.86" stroke="#000" stroke-opacity="0.18" stroke-width="1" stroke-dasharray="3,2"/><line x1="49" y1="655.3" x2="664" y2="655.3" stroke="#000" stroke-opacity="0.18" stroke-width="1" stroke-dasharray="3,2"/><line x1="48.6" y1="497.8" x2="48.6" y2="655.6" stroke="#333" stroke-width="1.3"/><text x="43.8" y="501.1" font-size="8.5" fill="#666" text-anchor="end" textLength="12.48" lengthAdjust="spacingAndGlyphs">100</text><text x="43.8" y="532.54" font-size="8.5" fill="#666" text-anchor="end" textLength="8.32" lengthAdjust="spacingAndGlyphs">80</text><text x="43.8" y="563.98" font-size="8.5" fill="#666" text-anchor="end" textLength="8.32" lengthAdjust="spacingAndGlyphs">60</text><text x="43.8" y="595.42" font-size="8.5" fill="#666" text-anchor="end" textLength="8.32" lengthAdjust="spacingAndGlyphs">40</text><text x="43.8" y="626.86" font-size="8.5" fill="#666" text-anchor="end" textLength="8.32" lengthAdjust="spacingAndGlyphs">20</text><text x="43.8" y="658.3" font-size="8.5" fill="#666" text-anchor="end" textLength="4.16" lengthAdjust="spacingAndGlyphs">0</text><circle cx="55.9" cy="686.4" r="5.4" fill="#e6e6fa"/><text x="64.7" y="690" font-size="9.8" fill="#111" textLength="62.43" lengthAdjust="spacingAndGlyphs">Register_LUCA</text><text x="130.33" y="690" font-size="9.8" fill="#4169e1" textLength="5" lengthAdjust="spacingAndGlyphs">0</text><circle cx="161.6" cy="686.4" r="5.4" fill="#008000"/><text x="170.4" y="690" font-size="9.8" fill="#111" textLength="57.94" lengthAdjust="spacingAndGlyphs">DecideOnDish</text><text x="231.54" y="690" font-size="9.8" fill="#4169e1" textLength="5" lengthAdjust="spacingAndGlyphs">0</text><circle cx="267.3" cy="686.4" r="5.4" fill="#ff0000"/><text x="276.1" y="690" font-size="9.8" fill="#111" textLength="56.93" lengthAdjust="spacingAndGlyphs">PickUpCutlery</text><text x="336.23" y="690" font-size="9.8" fill="#4169e1" textLength="5" lengthAdjust="spacingAndGlyphs">0</text><circle cx="373" cy="686.4" r="5.4" fill="#0000ff"/><text x="381.8" y="690" font-size="9.8" fill="#111" textLength="73.93" lengthAdjust="spacingAndGlyphs">GoToFoodCounter</text><text x="458.93" y="690" font-size="9.8" fill="#4169e1" textLength="5" lengthAdjust="spacingAndGlyphs">0</text><circle cx="478.7" cy="686.4" r="5.4" fill="#ffff00"/><text x="487.5" y="690" font-size="9.8" fill="#111" textLength="51.6" lengthAdjust="spacingAndGlyphs">WaitForFood</text><text x="542.3" y="690" font-size="9.8" fill="#4169e1" textLength="5" lengthAdjust="spacingAndGlyphs">0</text><circle cx="584.4" cy="686.4" r="5.4" fill="#ffd200"/><text x="593.2" y="690" font-size="9.8" fill="#111" textLength="49.43" lengthAdjust="spacingAndGlyphs">PickUpDrink</text><text x="645.83" y="690" font-size="9.8" fill="#4169e1" textLength="5" lengthAdjust="spacingAndGlyphs">0</text><circle cx="55.9" cy="701.3" r="5.4" fill="#ff00ff"/><text x="64.7" y="704.9" font-size="9.8" fill="#111" textLength="63.93" lengthAdjust="spacingAndGlyphs">PayAtCheckOut</text><text x="131.83" y="704.9" font-size="9.8" fill="#4169e1" textLength="5" lengthAdjust="spacingAndGlyphs">0</text><circle cx="161.6" cy="701.3" r="5.4" fill="#1e90ff"/><text x="170.4" y="704.9" font-size="9.8" fill="#111" textLength="42.96" lengthAdjust="spacingAndGlyphs">GetSeated</text><text x="216.56" y="704.9" font-size="9.8" fill="#4169e1" textLength="5" lengthAdjust="spacingAndGlyphs">0</text><circle cx="267.3" cy="701.3" r="5.4" fill="#9acd32"/><text x="276.1" y="704.9" font-size="9.8" fill="#111" textLength="13.49" lengthAdjust="spacingAndGlyphs">Eat</text><text x="292.79" y="704.9" font-size="9.8" fill="#4169e1" textLength="9.99" lengthAdjust="spacingAndGlyphs">91</text><circle cx="373" cy="701.3" r="5.4" fill="#008080"/><text x="381.8" y="704.9" font-size="9.8" fill="#111" textLength="51.45" lengthAdjust="spacingAndGlyphs">LeaveMensa</text><text x="436.45" y="704.9" font-size="9.8" fill="#4169e1" textLength="9.99" lengthAdjust="spacingAndGlyphs">24</text><line x1="740.3" y1="498.1" x2="1236.5" y2="498.1" stroke="#000" stroke-opacity="0.18" stroke-width="1" stroke-dasharray="3,2"/><line x1="740.3" y1="537.38" x2="1236.5" y2="537.38" stroke="#000" stroke-opacity="0.18" stroke-width="1" stroke-dasharray="3,2"/><line x1="740.3" y1="576.65" x2="1236.5" y2="576.65" stroke="#000" stroke-opacity="0.18" stroke-width="1" stroke-dasharray="3,2"/><line x1="740.3" y1="615.93" x2="1236.5" y2="615.93" stroke="#000" stroke-opacity="0.18" stroke-width="1" stroke-dasharray="3,2"/><line x1="740.3" y1="655.2" x2="1236.5" y2="655.2" stroke="#000" stroke-opacity="0.18" stroke-width="1" stroke-dasharray="3,2"/><line x1="740.3" y1="498.1" x2="740.3" y2="655.2" stroke="#000" stroke-opacity="0.18" stroke-width="1" stroke-dasharray="3,2"/><line x1="789.92" y1="498.1" x2="789.92" y2="655.2" stroke="#000" stroke-opacity="0.18" stroke-width="1" stroke-dasharray="3,2"/><line x1="839.54" y1="498.1" x2="839.54" y2="655.2" stroke="#000" stroke-opacity="0.18" stroke-width="1" stroke-dasharray="3,2"/><line x1="889.16" y1="498.1" x2="889.16" y2="655.2" stroke="#000" stroke-opacity="0.18" stroke-width="1" stroke-dasharray="3,2"/><line x1="938.78" y1="498.1" x2="938.78" y2="655.2" stroke="#000" stroke-opacity="0.18" stroke-width="1" stroke-dasharray="3,2"/><line x1="988.4" y1="498.1" x2="988.4" y2="655.2" stroke="#000" stroke-opacity="0.18" stroke-width="1" stroke-dasharray="3,2"/><line x1="1038.02" y1="498.1" x2="1038.02" y2="655.2" stroke="#000" stroke-opacity="0.18" stroke-width="1" stroke-dasharray="3,2"/><line x1="1087.64" y1="498.1" x2="1087.64" y2="655.2" stroke="#000" stroke-opacity="0.18" stroke-width="1" stroke-dasharray="3,2"/><line x1="1137.26" y1="498.1" x2="1137.26" y2="655.2" stroke="#000" stroke-opacity="0.18" stroke-width="1" stroke-dasharray="3,2"/><line x1="1186.88" y1="498.1" x2="1186.88" y2="655.2" stroke="#000" stroke-opacity="0.18" stroke-width="1" stroke-dasharray="3,2"/><line x1="1236.5" y1="498.1" x2="1236.5" y2="655.2" stroke="#000" stroke-opacity="0.18" stroke-width="1" stroke-dasharray="3,2"/><line x1="740.3" y1="497.8" x2="740.3" y2="655.5" stroke="#333" stroke-width="1.3"/><line x1="740" y1="655.4" x2="1236.5" y2="655.4" stroke="#555" stroke-width="1.6"/><text x="735.5" y="501.1" font-size="8.5" fill="#666" text-anchor="end" textLength="4.16" lengthAdjust="spacingAndGlyphs">1</text><text x="735.5" y="540.38" font-size="8.5" fill="#666" text-anchor="end" textLength="10.4" lengthAdjust="spacingAndGlyphs">0.5</text><text x="735.5" y="579.65" font-size="8.5" fill="#666" text-anchor="end" textLength="4.16" lengthAdjust="spacingAndGlyphs">0</text><text x="735.5" y="618.93" font-size="8.5" fill="#666" text-anchor="end" textLength="12.89" lengthAdjust="spacingAndGlyphs">-0.5</text><text x="735.5" y="658.2" font-size="8.5" fill="#666" text-anchor="end" textLength="6.65" lengthAdjust="spacingAndGlyphs">-1</text><text x="740.3" y="667.2" font-size="8.5" fill="#666" text-anchor="middle" textLength="6.65" lengthAdjust="spacingAndGlyphs">-1</text><text x="789.92" y="667.2" font-size="8.5" fill="#666" text-anchor="middle" textLength="12.89" lengthAdjust="spacingAndGlyphs">-0.8</text><text x="839.54" y="667.2" font-size="8.5" fill="#666" text-anchor="middle" textLength="12.89" lengthAdjust="spacingAndGlyphs">-0.6</text><text x="889.16" y="667.2" font-size="8.5" fill="#666" text-anchor="middle" textLength="12.89" lengthAdjust="spacingAndGlyphs">-0.4</text><text x="938.78" y="667.2" font-size="8.5" fill="#666" text-anchor="middle" textLength="12.89" lengthAdjust="spacingAndGlyphs">-0.2</text><text x="988.4" y="667.2" font-size="8.5" fill="#666" text-anchor="middle" textLength="4.16" lengthAdjust="spacingAndGlyphs">0</text><text x="1038.02" y="667.2" font-size="8.5" fill="#666" text-anchor="middle" textLength="10.4" lengthAdjust="spacingAndGlyphs">0.2</text><text x="1087.64" y="667.2" font-size="8.5" fill="#666" text-anchor="middle" textLength="10.4" lengthAdjust="spacingAndGlyphs">0.4</text><text x="1137.26" y="667.2" font-size="8.5" fill="#666" text-anchor="middle" textLength="10.4" lengthAdjust="spacingAndGlyphs">0.6</text><text x="1186.88" y="667.2" font-size="8.5" fill="#666" text-anchor="middle" textLength="10.4" lengthAdjust="spacingAndGlyphs">0.8</text><text x="1236.5" y="667.2" font-size="8.5" fill="#666" text-anchor="middle" textLength="4.16" lengthAdjust="spacingAndGlyphs">1</text><circle cx="747.6" cy="686.3" r="5.4" fill="#0000ff"/><text x="756.4" y="689.9" font-size="9.8" fill="#111" textLength="143.34" lengthAdjust="spacingAndGlyphs">Max lead time per number of guests</text>
<!-- separator -->
<rect x="1274" y="0" width="2" height="756" fill="#6d6d6d"/>
<rect x="1274" y="253.6" width="2" height="1.8" fill="#111"/>
<!-- right panel top -->
<rect x="1276" y="0" width="776" height="29" fill="#fff"/>
<rect x="1284" y="4" width="16" height="16" fill="#109ad6"/>
<g transform="translate(1284,4)" fill="none" stroke="#fff" stroke-linecap="round">
<path d="M1.6 11.6 L7.3 2.4" stroke-width="1.5"/><path d="M7.5 2.4 L8.3 13.6" stroke-width="1.9"/>
<path d="M3.8 10.3 Q9 9 15 10.2 L8.4 13.6" stroke-width="1.4" stroke-linejoin="round"/></g>
<rect x="1276" y="29" width="776" height="23" fill="#f0f0f0"/>
<rect x="1356" y="28" width="696" height="1" fill="#9c9c9c"/>
<rect x="1356" y="51" width="696" height="1" fill="#9c9c9c"/>
<path d="M1278.5 52 V31.5 Q1278.5 28.5 1281.5 28.5 H1352.5 Q1355.5 28.5 1355.5 31.5 V51.5" fill="#f7f7f7" stroke="#9c9c9c" stroke-width="1"/>
<rect x="1279" y="40" width="76.5" height="13" fill="#f4f4f4"/>
<path d="M1285.8 33.8 H1292.6 L1295.4 36.6 V45.9 H1285.8 Z" fill="#fff" stroke="#4a6a8e" stroke-width="1.1"/>
<path d="M1287.6 37.2 V36 H1290.6 V37.2 M1292.2 38.6 H1293.2 V39.6" fill="none" stroke="#7890b0" stroke-width="0.8"/>
<circle cx="1287.9" cy="42.7" r="5" fill="#c41e24"/>
<rect x="1287.2" y="39.6" width="1.4" height="1.3" fill="#fff"/>
<path d="M1285.3 42.1 H1290.5 M1287.9 42 V44.6 L1286.4 46.2 M1287.9 44.6 L1289.4 46.2" fill="none" stroke="#fff" stroke-width="1.1"/>
<text x="1302.5" y="44.6" font-size="12.7" fill="#111" textLength="28.5" lengthAdjust="spacingAndGlyphs">guest</text>
<path d="M1339.5 35.5 L1349 44.5 M1349 35.5 L1339.5 44.5" stroke="#777" stroke-width="2.4"/>
<path d="M1339.5 35.5 L1349 44.5 M1349 35.5 L1339.5 44.5" stroke="#fff" stroke-width="0.9"/>
<!-- grid area -->
<rect x="1278" y="52" width="774" height="704" fill="#fff"/>
<line x1="1281.5" y1="54" x2="1281.5" y2="756" stroke="#eeeeee" stroke-width="1"/><line x1="1291.5" y1="54" x2="1291.5" y2="756" stroke="#eeeeee" stroke-width="1"/><line x1="1301.5" y1="54" x2="1301.5" y2="756" stroke="#dcdcdc" stroke-width="1"/><line x1="1311.5" y1="54" x2="1311.5" y2="756" stroke="#eeeeee" stroke-width="1"/><line x1="1321.5" y1="54" x2="1321.5" y2="756" stroke="#eeeeee" stroke-width="1"/><line x1="1331.5" y1="54" x2="1331.5" y2="756" stroke="#eeeeee" stroke-width="1"/><line x1="1341.5" y1="54" x2="1341.5" y2="756" stroke="#eeeeee" stroke-width="1"/><line x1="1351.5" y1="54" x2="1351.5" y2="756" stroke="#dcdcdc" stroke-width="1"/><line x1="1361.5" y1="54" x2="1361.5" y2="756" stroke="#eeeeee" stroke-width="1"/><line x1="1371.5" y1="54" x2="1371.5" y2="756" stroke="#eeeeee" stroke-width="1"/><line x1="1381.5" y1="54" x2="1381.5" y2="756" stroke="#eeeeee" stroke-width="1"/><line x1="1391.5" y1="54" x2="1391.5" y2="756" stroke="#eeeeee" stroke-width="1"/><line x1="1401.5" y1="54" x2="1401.5" y2="756" stroke="#dcdcdc" stroke-width="1"/><line x1="1411.5" y1="54" x2="1411.5" y2="756" stroke="#eeeeee" stroke-width="1"/><line x1="1421.5" y1="54" x2="1421.5" y2="756" stroke="#eeeeee" stroke-width="1"/><line x1="1431.5" y1="54" x2="1431.5" y2="756" stroke="#eeeeee" stroke-width="1"/><line x1="1441.5" y1="54" x2="1441.5" y2="756" stroke="#eeeeee" stroke-width="1"/><line x1="1451.5" y1="54" x2="1451.5" y2="756" stroke="#dcdcdc" stroke-width="1"/><line x1="1461.5" y1="54" x2="1461.5" y2="756" stroke="#eeeeee" stroke-width="1"/><line x1="1471.5" y1="54" x2="1471.5" y2="756" stroke="#eeeeee" stroke-width="1"/><line x1="1481.5" y1="54" x2="1481.5" y2="756" stroke="#eeeeee" stroke-width="1"/><line x1="1491.5" y1="54" x2="1491.5" y2="756" stroke="#eeeeee" stroke-width="1"/><line x1="1501.5" y1="54" x2="1501.5" y2="756" stroke="#dcdcdc" stroke-width="1"/><line x1="1511.5" y1="54" x2="1511.5" y2="756" stroke="#eeeeee" stroke-width="1"/><line x1="1521.5" y1="54" x2="1521.5" y2="756" stroke="#eeeeee" stroke-width="1"/><line x1="1531.5" y1="54" x2="1531.5" y2="756" stroke="#eeeeee" stroke-width="1"/><line x1="1541.5" y1="54" x2="1541.5" y2="756" stroke="#eeeeee" stroke-width="1"/><line x1="1551.5" y1="54" x2="1551.5" y2="756" stroke="#dcdcdc" stroke-width="1"/><line x1="1561.5" y1="54" x2="1561.5" y2="756" stroke="#eeeeee" stroke-width="1"/><line x1="1571.5" y1="54" x2="1571.5" y2="756" stroke="#eeeeee" stroke-width="1"/><line x1="1581.5" y1="54" x2="1581.5" y2="756" stroke="#eeeeee" stroke-width="1"/><line x1="1591.5" y1="54" x2="1591.5" y2="756" stroke="#eeeeee" stroke-width="1"/><line x1="1601.5" y1="54" x2="1601.5" y2="756" stroke="#dcdcdc" stroke-width="1"/><line x1="1611.5" y1="54" x2="1611.5" y2="756" stroke="#eeeeee" stroke-width="1"/><line x1="1621.5" y1="54" x2="1621.5" y2="756" stroke="#eeeeee" stroke-width="1"/><line x1="1631.5" y1="54" x2="1631.5" y2="756" stroke="#eeeeee" stroke-width="1"/><line x1="1641.5" y1="54" x2="1641.5" y2="756" stroke="#eeeeee" stroke-width="1"/><line x1="1651.5" y1="54" x2="1651.5" y2="756" stroke="#dcdcdc" stroke-width="1"/><line x1="1661.5" y1="54" x2="1661.5" y2="756" stroke="#eeeeee" stroke-width="1"/><line x1="1671.5" y1="54" x2="1671.5" y2="756" stroke="#eeeeee" stroke-width="1"/><line x1="1681.5" y1="54" x2="1681.5" y2="756" stroke="#eeeeee" stroke-width="1"/><line x1="1691.5" y1="54" x2="1691.5" y2="756" stroke="#eeeeee" stroke-width="1"/><line x1="1701.5" y1="54" x2="1701.5" y2="756" stroke="#dcdcdc" stroke-width="1"/><line x1="1711.5" y1="54" x2="1711.5" y2="756" stroke="#eeeeee" stroke-width="1"/><line x1="1721.5" y1="54" x2="1721.5" y2="756" stroke="#eeeeee" stroke-width="1"/><line x1="1731.5" y1="54" x2="1731.5" y2="756" stroke="#eeeeee" stroke-width="1"/><line x1="1741.5" y1="54" x2="1741.5" y2="756" stroke="#eeeeee" stroke-width="1"/><line x1="1751.5" y1="54" x2="1751.5" y2="756" stroke="#dcdcdc" stroke-width="1"/><line x1="1761.5" y1="54" x2="1761.5" y2="756" stroke="#eeeeee" stroke-width="1"/><line x1="1771.5" y1="54" x2="1771.5" y2="756" stroke="#eeeeee" stroke-width="1"/><line x1="1781.5" y1="54" x2="1781.5" y2="756" stroke="#eeeeee" stroke-width="1"/><line x1="1791.5" y1="54" x2="1791.5" y2="756" stroke="#eeeeee" stroke-width="1"/><line x1="1801.5" y1="54" x2="1801.5" y2="756" stroke="#dcdcdc" stroke-width="1"/><line x1="1811.5" y1="54" x2="1811.5" y2="756" stroke="#eeeeee" stroke-width="1"/><line x1="1821.5" y1="54" x2="1821.5" y2="756" stroke="#eeeeee" stroke-width="1"/><line x1="1831.5" y1="54" x2="1831.5" y2="756" stroke="#eeeeee" stroke-width="1"/><line x1="1841.5" y1="54" x2="1841.5" y2="756" stroke="#eeeeee" stroke-width="1"/><line x1="1851.5" y1="54" x2="1851.5" y2="756" stroke="#dcdcdc" stroke-width="1"/><line x1="1861.5" y1="54" x2="1861.5" y2="756" stroke="#eeeeee" stroke-width="1"/><line x1="1871.5" y1="54" x2="1871.5" y2="756" stroke="#eeeeee" stroke-width="1"/><line x1="1881.5" y1="54" x2="1881.5" y2="756" stroke="#eeeeee" stroke-width="1"/><line x1="1891.5" y1="54" x2="1891.5" y2="756" stroke="#eeeeee" stroke-width="1"/><line x1="1901.5" y1="54" x2="1901.5" y2="756" stroke="#dcdcdc" stroke-width="1"/><line x1="1911.5" y1="54" x2="1911.5" y2="756" stroke="#eeeeee" stroke-width="1"/><line x1="1921.5" y1="54" x2="1921.5" y2="756" stroke="#eeeeee" stroke-width="1"/><line x1="1931.5" y1="54" x2="1931.5" y2="756" stroke="#eeeeee" stroke-width="1"/><line x1="1941.5" y1="54" x2="1941.5" y2="756" stroke="#eeeeee" stroke-width="1"/><line x1="1951.5" y1="54" x2="1951.5" y2="756" stroke="#dcdcdc" stroke-width="1"/><line x1="1961.5" y1="54" x2="1961.5" y2="756" stroke="#eeeeee" stroke-width="1"/><line x1="1971.5" y1="54" x2="1971.5" y2="756" stroke="#eeeeee" stroke-width="1"/><line x1="1981.5" y1="54" x2="1981.5" y2="756" stroke="#eeeeee" stroke-width="1"/><line x1="1991.5" y1="54" x2="1991.5" y2="756" stroke="#eeeeee" stroke-width="1"/><line x1="2001.5" y1="54" x2="2001.5" y2="756" stroke="#dcdcdc" stroke-width="1"/><line x1="2011.5" y1="54" x2="2011.5" y2="756" stroke="#eeeeee" stroke-width="1"/><line x1="2021.5" y1="54" x2="2021.5" y2="756" stroke="#eeeeee" stroke-width="1"/><line x1="2031.5" y1="54" x2="2031.5" y2="756" stroke="#eeeeee" stroke-width="1"/><line x1="2041.5" y1="54" x2="2041.5" y2="756" stroke="#eeeeee" stroke-width="1"/><line x1="2051.5" y1="54" x2="2051.5" y2="756" stroke="#dcdcdc" stroke-width="1"/><line x1="1280" y1="54.5" x2="2052" y2="54.5" stroke="#eeeeee" stroke-width="1"/><line x1="1280" y1="64.5" x2="2052" y2="64.5" stroke="#eeeeee" stroke-width="1"/><line x1="1280" y1="74.5" x2="2052" y2="74.5" stroke="#dcdcdc" stroke-width="1"/><line x1="1280" y1="84.5" x2="2052" y2="84.5" stroke="#eeeeee" stroke-width="1"/><line x1="1280" y1="94.5" x2="2052" y2="94.5" stroke="#eeeeee" stroke-width="1"/><line x1="1280" y1="104.5" x2="2052" y2="104.5" stroke="#eeeeee" stroke-width="1"/><line x1="1280" y1="114.5" x2="2052" y2="114.5" stroke="#eeeeee" stroke-width="1"/><line x1="1280" y1="124.5" x2="2052" y2="124.5" stroke="#dcdcdc" stroke-width="1"/><line x1="1280" y1="134.5" x2="2052" y2="134.5" stroke="#eeeeee" stroke-width="1"/><line x1="1280" y1="144.5" x2="2052" y2="144.5" stroke="#eeeeee" stroke-width="1"/><line x1="1280" y1="154.5" x2="2052" y2="154.5" stroke="#eeeeee" stroke-width="1"/><line x1="1280" y1="164.5" x2="2052" y2="164.5" stroke="#eeeeee" stroke-width="1"/><line x1="1280" y1="174.5" x2="2052" y2="174.5" stroke="#dcdcdc" stroke-width="1"/><line x1="1280" y1="184.5" x2="2052" y2="184.5" stroke="#eeeeee" stroke-width="1"/><line x1="1280" y1="194.5" x2="2052" y2="194.5" stroke="#eeeeee" stroke-width="1"/><line x1="1280" y1="204.5" x2="2052" y2="204.5" stroke="#eeeeee" stroke-width="1"/><line x1="1280" y1="214.5" x2="2052" y2="214.5" stroke="#eeeeee" stroke-width="1"/><line x1="1280" y1="224.5" x2="2052" y2="224.5" stroke="#dcdcdc" stroke-width="1"/><line x1="1280" y1="234.5" x2="2052" y2="234.5" stroke="#eeeeee" stroke-width="1"/><line x1="1280" y1="244.5" x2="2052" y2="244.5" stroke="#eeeeee" stroke-width="1"/><line x1="1280" y1="254.5" x2="2052" y2="254.5" stroke="#eeeeee" stroke-width="1"/><line x1="1280" y1="264.5" x2="2052" y2="264.5" stroke="#eeeeee" stroke-width="1"/><line x1="1280" y1="274.5" x2="2052" y2="274.5" stroke="#dcdcdc" stroke-width="1"/><line x1="1280" y1="284.5" x2="2052" y2="284.5" stroke="#eeeeee" stroke-width="1"/><line x1="1280" y1="294.5" x2="2052" y2="294.5" stroke="#eeeeee" stroke-width="1"/><line x1="1280" y1="304.5" x2="2052" y2="304.5" stroke="#eeeeee" stroke-width="1"/><line x1="1280" y1="314.5" x2="2052" y2="314.5" stroke="#eeeeee" stroke-width="1"/><line x1="1280" y1="324.5" x2="2052" y2="324.5" stroke="#dcdcdc" stroke-width="1"/><line x1="1280" y1="334.5" x2="2052" y2="334.5" stroke="#eeeeee" stroke-width="1"/><line x1="1280" y1="344.5" x2="2052" y2="344.5" stroke="#eeeeee" stroke-width="1"/><line x1="1280" y1="354.5" x2="2052" y2="354.5" stroke="#eeeeee" stroke-width="1"/><line x1="1280" y1="364.5" x2="2052" y2="364.5" stroke="#eeeeee" stroke-width="1"/><line x1="1280" y1="374.5" x2="2052" y2="374.5" stroke="#dcdcdc" stroke-width="1"/><line x1="1280" y1="384.5" x2="2052" y2="384.5" stroke="#eeeeee" stroke-width="1"/><line x1="1280" y1="394.5" x2="2052" y2="394.5" stroke="#eeeeee" stroke-width="1"/><line x1="1280" y1="404.5" x2="2052" y2="404.5" stroke="#eeeeee" stroke-width="1"/><line x1="1280" y1="414.5" x2="2052" y2="414.5" stroke="#eeeeee" stroke-width="1"/><line x1="1280" y1="424.5" x2="2052" y2="424.5" stroke="#dcdcdc" stroke-width="1"/><line x1="1280" y1="434.5" x2="2052" y2="434.5" stroke="#eeeeee" stroke-width="1"/><line x1="1280" y1="444.5" x2="2052" y2="444.5" stroke="#eeeeee" stroke-width="1"/><line x1="1280" y1="454.5" x2="2052" y2="454.5" stroke="#eeeeee" stroke-width="1"/><line x1="1280" y1="464.5" x2="2052" y2="464.5" stroke="#eeeeee" stroke-width="1"/><line x1="1280" y1="474.5" x2="2052" y2="474.5" stroke="#dcdcdc" stroke-width="1"/><line x1="1280" y1="484.5" x2="2052" y2="484.5" stroke="#eeeeee" stroke-width="1"/><line x1="1280" y1="494.5" x2="2052" y2="494.5" stroke="#eeeeee" stroke-width="1"/><line x1="1280" y1="504.5" x2="2052" y2="504.5" stroke="#eeeeee" stroke-width="1"/><line x1="1280" y1="514.5" x2="2052" y2="514.5" stroke="#eeeeee" stroke-width="1"/><line x1="1280" y1="524.5" x2="2052" y2="524.5" stroke="#dcdcdc" stroke-width="1"/><line x1="1280" y1="534.5" x2="2052" y2="534.5" stroke="#eeeeee" stroke-width="1"/><line x1="1280" y1="544.5" x2="2052" y2="544.5" stroke="#eeeeee" stroke-width="1"/><line x1="1280" y1="554.5" x2="2052" y2="554.5" stroke="#eeeeee" stroke-width="1"/><line x1="1280" y1="564.5" x2="2052" y2="564.5" stroke="#eeeeee" stroke-width="1"/><line x1="1280" y1="574.5" x2="2052" y2="574.5" stroke="#dcdcdc" stroke-width="1"/><line x1="1280" y1="584.5" x2="2052" y2="584.5" stroke="#eeeeee" stroke-width="1"/><line x1="1280" y1="594.5" x2="2052" y2="594.5" stroke="#eeeeee" stroke-width="1"/><line x1="1280" y1="604.5" x2="2052" y2="604.5" stroke="#eeeeee" stroke-width="1"/><line x1="1280" y1="614.5" x2="2052" y2="614.5" stroke="#eeeeee" stroke-width="1"/><line x1="1280" y1="624.5" x2="2052" y2="624.5" stroke="#dcdcdc" stroke-width="1"/><line x1="1280" y1="634.5" x2="2052" y2="634.5" stroke="#eeeeee" stroke-width="1"/><line x1="1280" y1="644.5" x2="2052" y2="644.5" stroke="#eeeeee" stroke-width="1"/><line x1="1280" y1="654.5" x2="2052" y2="654.5" stroke="#eeeeee" stroke-width="1"/><line x1="1280" y1="664.5" x2="2052" y2="664.5" stroke="#eeeeee" stroke-width="1"/><line x1="1280" y1="674.5" x2="2052" y2="674.5" stroke="#dcdcdc" stroke-width="1"/><line x1="1280" y1="684.5" x2="2052" y2="684.5" stroke="#eeeeee" stroke-width="1"/><line x1="1280" y1="694.5" x2="2052" y2="694.5" stroke="#eeeeee" stroke-width="1"/><line x1="1280" y1="704.5" x2="2052" y2="704.5" stroke="#eeeeee" stroke-width="1"/><line x1="1280" y1="714.5" x2="2052" y2="714.5" stroke="#eeeeee" stroke-width="1"/><line x1="1280" y1="724.5" x2="2052" y2="724.5" stroke="#dcdcdc" stroke-width="1"/><line x1="1280" y1="734.5" x2="2052" y2="734.5" stroke="#eeeeee" stroke-width="1"/><line x1="1280" y1="744.5" x2="2052" y2="744.5" stroke="#eeeeee" stroke-width="1"/><line x1="1280" y1="754.5" x2="2052" y2="754.5" stroke="#eeeeee" stroke-width="1"/>
<defs><linearGradient id="lg" x1="0" x2="1" y1="0" y2="0"><stop offset="0" stop-color="#d8d8d8"/><stop offset="1" stop-color="#ffffff" stop-opacity="0"/></linearGradient></defs>
<rect x="1279" y="52" width="12" height="704" fill="url(#lg)"/>
<defs><linearGradient id="lg2" x1="0" x2="0" y1="0" y2="1"><stop offset="0" stop-color="#e4e4e4"/><stop offset="1" stop-color="#ffffff" stop-opacity="0"/></linearGradient></defs>
<rect x="1279" y="51.5" width="773" height="3.5" fill="url(#lg2)"/>
<rect x="1276" y="29" width="2" height="727" fill="#d4d4d4"/>
<rect x="1278" y="40" width="1" height="716" fill="#8e8e8e"/>
<!-- axes -->
<line x1="1280" y1="74.5" x2="2052" y2="74.5" stroke="#1a66b8" stroke-width="1.4"/>
<line x1="1301.5" y1="54" x2="1301.5" y2="756" stroke="#1a66b8" stroke-width="1.4"/>
<line x1="1281" y1="74.5" x2="1301" y2="74.5" stroke="#333" stroke-width="1"/>
<line x1="1301.5" y1="54" x2="1301.5" y2="70" stroke="#333" stroke-width="1"/>
<circle cx="1301" cy="67.3" r="2.2" fill="#000"/>
<path d="M1298 70 H1304 L1304.8 77.5 H1303.5 L1303 84 H1299 L1298.5 77.5 H1297.2 Z" fill="#000"/>
<line x1="1591" y1="86" x2="1611" y2="86" stroke="#000" stroke-width="2"/><circle cx="1601" cy="94" r="4" fill="#000"/><text x="1613.9" y="96.7" font-size="12" fill="#222" textLength="52" lengthAdjust="spacingAndGlyphs">statechart</text><line x1="1601" y1="94" x2="1601" y2="124" stroke="#000" stroke-width="2"/><path d="M1598 123.5 L1604 123.5 L1601 134.5 Z" fill="#000"/><line x1="1601" y1="164.5" x2="1601" y2="198" stroke="#000" stroke-width="2"/><path d="M1598 198.5 L1604 198.5 L1601 209.5 Z" fill="#000"/><line x1="1601" y1="239.5" x2="1601" y2="273" stroke="#000" stroke-width="2"/><path d="M1598 273.5 L1604 273.5 L1601 284.5 Z" fill="#000"/><line x1="1601" y1="314.5" x2="1601" y2="350" stroke="#000" stroke-width="2"/><path d="M1598 344.5 L1604 344.5 L1601 355.5 Z" fill="#000"/><line x1="1601" y1="372.5" x2="1601" y2="403" stroke="#000" stroke-width="2"/><path d="M1598 403.5 L1604 403.5 L1601 414.5 Z" fill="#000"/><line x1="1601" y1="444.5" x2="1601" y2="473" stroke="#000" stroke-width="2"/><path d="M1598 473.5 L1604 473.5 L1601 484.5 Z" fill="#000"/><line x1="1601" y1="514.5" x2="1601" y2="550" stroke="#000" stroke-width="2"/><path d="M1598 544.5 L1604 544.5 L1601 555.5 Z" fill="#000"/><line x1="1601" y1="572.5" x2="1601" y2="600" stroke="#000" stroke-width="2"/><path d="M1598 594.5 L1604 594.5 L1601 605.5 Z" fill="#000"/><line x1="1601" y1="622.5" x2="1601" y2="643" stroke="#000" stroke-width="2"/><path d="M1598 643.5 L1604 643.5 L1601 654.5 Z" fill="#000"/><path d="M1612 364 H1692 Q1700 364 1700 356 V311.5 Q1700 303.5 1692 303.5 H1672" fill="none" stroke="#000" stroke-width="2" stroke-dasharray="4,4"/><path d="M1672.5 300.5 L1672.5 306.5 L1661.5 303.5 Z" fill="#000"/><path d="M1612 564 H1693 Q1701 564 1701 556 V441.5 Q1701 433.5 1693 433.5 H1682" fill="none" stroke="#000" stroke-width="2" stroke-dasharray="4,4"/><path d="M1682.5 430.5 L1682.5 436.5 L1671.5 433.5 Z" fill="#000"/><path d="M1612 614 H1820" fill="none" stroke="#000" stroke-width="2" stroke-dasharray="4,4"/><path d="M1820.5 611 L1820.5 617 L1831.5 614 Z" fill="#000"/><path d="M1651.5 664 H1891 Q1901 664 1901 654 V645" fill="none" stroke="#000" stroke-width="2"/><path d="M1898 645.5 L1904 645.5 L1901 634.5 Z" fill="#000"/><line x1="1901" y1="604.5" x2="1901" y2="505" stroke="#000" stroke-width="2"/><path d="M1898 505.5 L1904 505.5 L1901 494.5 Z" fill="#000"/><line x1="1901" y1="464.5" x2="1901" y2="383" stroke="#000" stroke-width="2"/><path d="M1898 383.5 L1904 383.5 L1901 372.5 Z" fill="#000"/><line x1="1901" y1="355.5" x2="1901" y2="305" stroke="#000" stroke-width="2"/><path d="M1898 305.5 L1904 305.5 L1901 294.5 Z" fill="#000"/><line x1="1901" y1="264.5" x2="1901" y2="225" stroke="#000" stroke-width="2"/><path d="M1898 225.5 L1904 225.5 L1901 214.5 Z" fill="#000"/><line x1="1901" y1="184.5" x2="1901" y2="152" stroke="#000" stroke-width="2"/><path d="M1898 153 L1904 153 L1901 142 Z" fill="#000"/><path d="M1912 364 H1933 Q1941 364 1941 372 V453" fill="none" stroke="#000" stroke-width="2" stroke-dasharray="4,4"/><path d="M1938 453.5 L1944 453.5 L1941 464.5 Z" fill="#000"/><text x="1913.9" y="357" font-size="12" fill="#222" textLength="96.4" lengthAdjust="spacingAndGlyphs">transWithCapacity</text><rect x="1541.5" y="134.5" width="115.0" height="30.0" rx="7" ry="7" fill="#ffd700" stroke="#555" stroke-width="1"/><text x="1554.2" y="147.3" font-size="12" fill="#1a1a1a" textLength="76" lengthAdjust="spacingAndGlyphs">Register_LUCA</text><rect x="1541.5" y="209.5" width="120.0" height="30.0" rx="7" ry="7" fill="#ffd700" stroke="#555" stroke-width="1"/><text x="1554.2" y="222.3" font-size="12" fill="#1a1a1a" textLength="74" lengthAdjust="spacingAndGlyphs">DecideOnDish</text><rect x="1541.5" y="284.5" width="120.0" height="30.0" rx="7" ry="7" fill="#ffd700" stroke="#555" stroke-width="1"/><text x="1554" y="297.3" font-size="12" fill="#1a1a1a" textLength="74.3" lengthAdjust="spacingAndGlyphs">PickUpCutlery</text><rect x="1531.5" y="414.5" width="140.0" height="30.0" rx="7" ry="7" fill="#ffd700" stroke="#555" stroke-width="1"/><text x="1543.8" y="427.3" font-size="12" fill="#1a1a1a" textLength="97.2" lengthAdjust="spacingAndGlyphs">GoToFoodCounter</text><rect x="1551.5" y="484.5" width="100.0" height="30.0" rx="7" ry="7" fill="#ffd700" stroke="#555" stroke-width="1"/><text x="1564" y="497.3" font-size="12" fill="#1a1a1a" textLength="67.4" lengthAdjust="spacingAndGlyphs">WaitForFood</text><rect x="1551.5" y="654.5" width="100.0" height="30.0" rx="7" ry="7" fill="#ffd700" stroke="#555" stroke-width="1"/><text x="1564" y="667.3" font-size="12" fill="#1a1a1a" textLength="64.8" lengthAdjust="spacingAndGlyphs">PickUpDrink</text><rect x="1831.5" y="604.5" width="140.0" height="30.0" rx="7" ry="7" fill="#ffd700" stroke="#555" stroke-width="1"/><text x="1844" y="617.3" font-size="12" fill="#1a1a1a" textLength="83.6" lengthAdjust="spacingAndGlyphs">PayAtCheckOut</text><rect x="1851.5" y="464.5" width="100.0" height="30.0" rx="7" ry="7" fill="#ffd700" stroke="#555" stroke-width="1"/><text x="1864" y="477.3" font-size="12" fill="#1a1a1a" textLength="52.5" lengthAdjust="spacingAndGlyphs">GetSeated</text><rect x="1851.5" y="264.5" width="100.0" height="30.0" rx="7" ry="7" fill="#ffd700" stroke="#555" stroke-width="1"/><text x="1890" y="279.3" font-size="12" fill="#1a1a1a" textLength="16" lengthAdjust="spacingAndGlyphs">Eat</text><rect x="1851.5" y="184.5" width="100.0" height="30.0" rx="7" ry="7" fill="#ffd700" stroke="#555" stroke-width="1"/><text x="1864.4" y="197.3" font-size="12" fill="#1a1a1a" textLength="64" lengthAdjust="spacingAndGlyphs">LeaveMensa</text><circle cx="1601.3" cy="184.3" r="6" fill="#fff" stroke="#111" stroke-width="1.1"/><path d="M1601.3 178.8 L1601.3 184.3 L1604.6 186.5" fill="none" stroke="#111" stroke-width="1.1"/><circle cx="1601.3" cy="259.3" r="6" fill="#fff" stroke="#111" stroke-width="1.1"/><path d="M1601.3 253.8 L1601.3 259.3 L1604.6 261.5" fill="none" stroke="#111" stroke-width="1.1"/><circle cx="1601.3" cy="334.3" r="6" fill="#fff" stroke="#111" stroke-width="1.1"/><path d="M1601.3 328.8 L1601.3 334.3 L1604.6 336.5" fill="none" stroke="#111" stroke-width="1.1"/><circle cx="1601.3" cy="464.3" r="6" fill="#fff" stroke="#111" stroke-width="1.1"/><path d="M1601.3 458.8 L1601.3 464.3 L1604.6 466.5" fill="none" stroke="#111" stroke-width="1.1"/><circle cx="1601.3" cy="534.3" r="6" fill="#fff" stroke="#111" stroke-width="1.1"/><path d="M1601.3 528.8 L1601.3 534.3 L1604.6 536.5" fill="none" stroke="#111" stroke-width="1.1"/><circle cx="1901.3" cy="164.3" r="6" fill="#fff" stroke="#111" stroke-width="1.1"/><path d="M1901.3 158.8 L1901.3 164.3 L1904.6 166.5" fill="none" stroke="#111" stroke-width="1.1"/><circle cx="1901.3" cy="244.3" r="6" fill="#fff" stroke="#111" stroke-width="1.1"/><path d="M1901.3 238.8 L1901.3 244.3 L1904.6 246.5" fill="none" stroke="#111" stroke-width="1.1"/><circle cx="1901.3" cy="444.3" r="6" fill="#fff" stroke="#111" stroke-width="1.1"/><path d="M1901.3 438.8 L1901.3 444.3 L1904.6 446.5" fill="none" stroke="#111" stroke-width="1.1"/><circle cx="1901.3" cy="584.3" r="6" fill="#fff" stroke="#111" stroke-width="1.1"/><path d="M1901.3 578.8 L1901.3 584.3 L1904.6 586.5" fill="none" stroke="#111" stroke-width="1.1"/><circle cx="1671.3" cy="664.3" r="6" fill="#fff" stroke="#111" stroke-width="1.1"/><path d="M1671.3 658.8 L1671.3 664.3 L1674.6 666.5" fill="none" stroke="#111" stroke-width="1.1"/><path d="M1601 355.5 L1612 364 L1601 372.5 L1590 364 Z" fill="none" stroke="#000" stroke-width="2"/><path d="M1601 555.5 L1612 564 L1601 572.5 L1590 564 Z" fill="none" stroke="#000" stroke-width="2"/><path d="M1601 605.5 L1612 614 L1601 622.5 L1590 614 Z" fill="none" stroke="#000" stroke-width="2"/><path d="M1901 355.5 L1912 364 L1901 372.5 L1890 364 Z" fill="none" stroke="#000" stroke-width="2"/><circle cx="1901.4" cy="134.2" r="8.1" fill="#fff" stroke="#000" stroke-width="1.1"/><circle cx="1901.4" cy="134.2" r="4" fill="#000"/>
</svg>
</body></html>
